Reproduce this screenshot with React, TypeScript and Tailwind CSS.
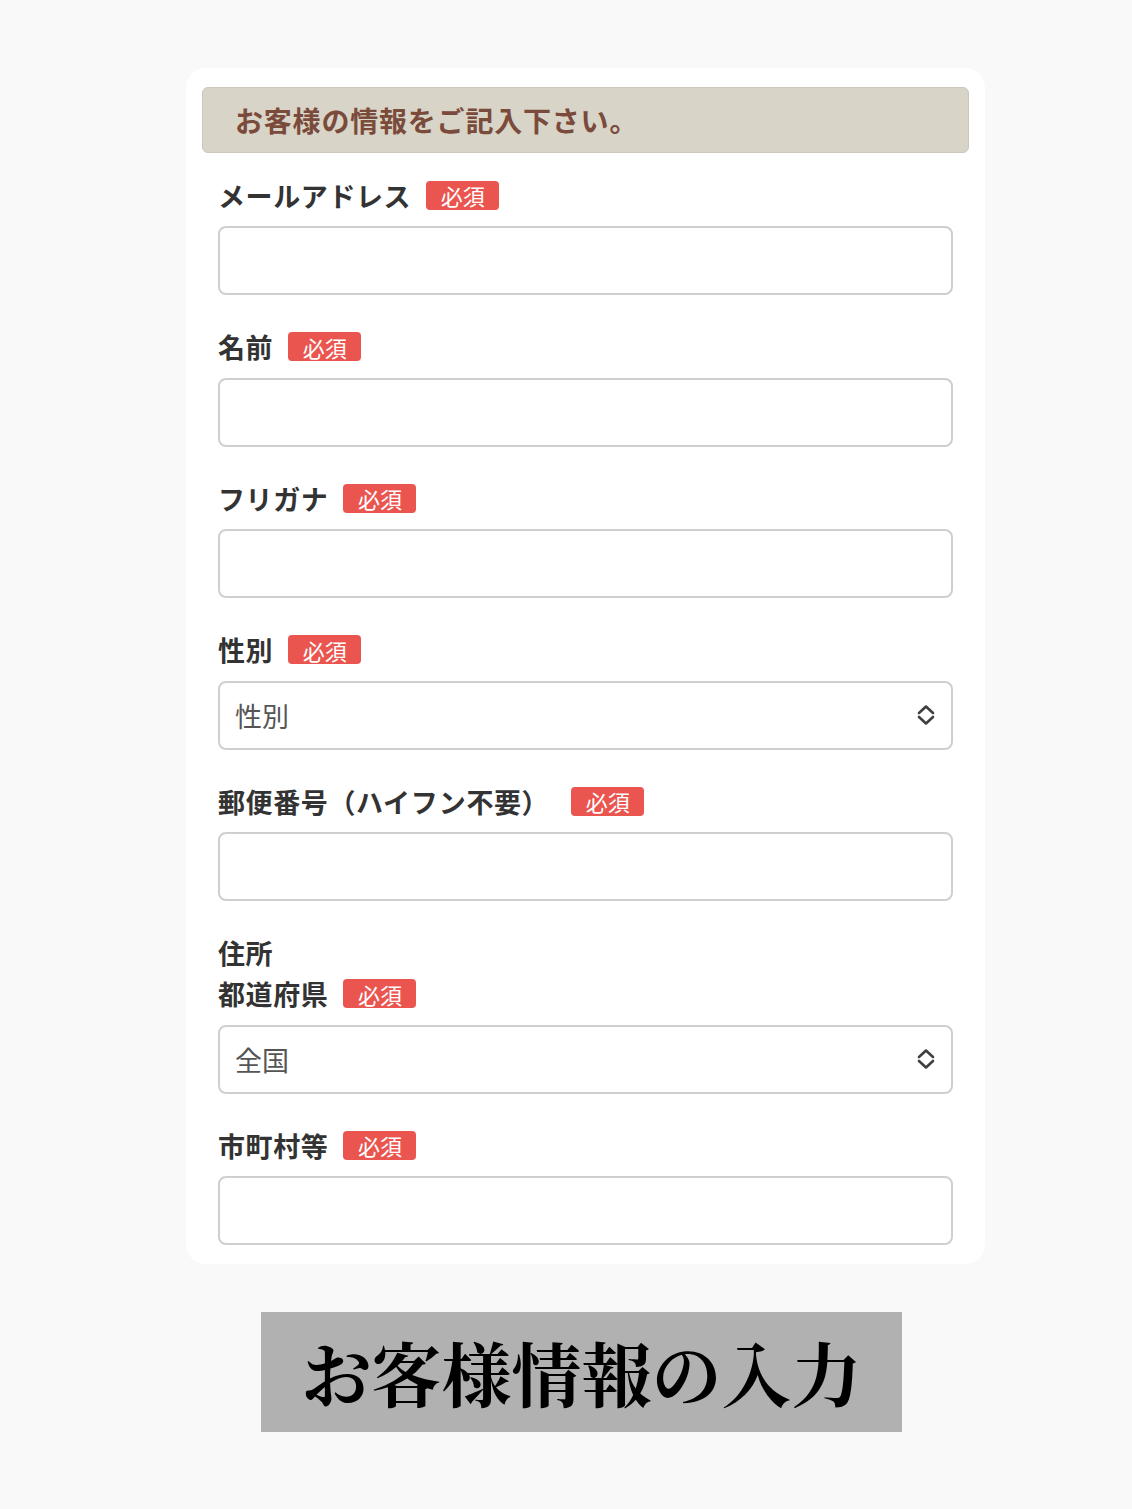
import { Fragment } from 'react';

type Field = {
    labels: string[];
    kind: 'text' | 'select';
    placeholder?: string;
};

const fields: Field[] = [
    { labels: ['メールアドレス'], kind: 'text' },
    { labels: ['名前'], kind: 'text' },
    { labels: ['フリガナ'], kind: 'text' },
    { labels: ['性別'], kind: 'select', placeholder: '性別' },
    { labels: ['郵便番号（ハイフン不要）'], kind: 'text' },
    { labels: ['住所', '都道府県'], kind: 'select', placeholder: '全国' },
    { labels: ['市町村等'], kind: 'text' },
];

const jpFont = "font-['Noto_Sans_CJK_JP',sans-serif]";

function RequiredBadge({ wide }: { wide?: boolean }) {
    return (
        <span
            className={`inline-flex h-[29px] w-[73px] items-center justify-center rounded-[4px] bg-[#ea554f] text-[22px] leading-none font-normal text-white ${wide ? 'ml-[22px]' : 'ml-[15px]'}`}
        >
            必須
        </span>
    );
}

function UpDown() {
    return (
        <svg width="20" height="24" viewBox="0 0 20 24" fill="none" stroke="#3f3f3f" strokeWidth="2.6" strokeLinecap="round" strokeLinejoin="round">
            <path d="M3 10 L10 3.5 L17 10" />
            <path d="M3 14 L10 20.5 L17 14" />
        </svg>
    );
}

function FieldBlock({ field }: { field: Field }) {
    const last = field.labels.length - 1;
    return (
        <div className="flex flex-col">
            <div className="flex flex-col">
                {field.labels.map((label, i) => (
                    <Fragment key={label}>
                        {i === last ? (
                            <div className="flex h-[30px] items-center">
                                <span className="text-[27px] leading-none font-bold tracking-[0.6px] text-[#333333]">{label}</span>
                                <RequiredBadge wide={label.endsWith('）')} />
                            </div>
                        ) : (
                            <div className="mb-[11px] flex h-[30px] items-center">
                                <span className="text-[27px] leading-none font-bold tracking-[0.6px] text-[#333333]">{label}</span>
                            </div>
                        )}
                    </Fragment>
                ))}
            </div>
            <div className="mt-[16px] flex h-[69px] items-center justify-between rounded-[8px] border-2 border-[#cfcfcf] bg-white pl-[15px] pr-[15px]">
                {field.kind === 'select' ? (
                    <>
                        <span className="text-[27px] leading-none text-[#555555]">{field.placeholder}</span>
                        <UpDown />
                    </>
                ) : null}
            </div>
        </div>
    );
}

export default function App() {
    return (
        <div className={`min-h-[1509px] bg-[#f9f9f9] pt-[68px] pb-[78px] ${jpFont}`}>
            <div className="ml-[186px] w-[799px] rounded-[20px] bg-white px-[16px] pt-[19px] pb-[19px]">
                <div className="flex h-[66px] items-center rounded-[6px] border border-[#cdc6bb] bg-[#d8d4c8] pl-[32px]">
                    <span className="text-[28px] leading-none font-bold tracking-[0.8px] text-[#7a4a3a]">
                        お客様の情報をご記入下さい。
                    </span>
                </div>
                <div className="mt-[27px] flex flex-col gap-[36.5px] px-[16px]">
                    {fields.map((f) => (
                        <FieldBlock key={f.labels.join('-')} field={f} />
                    ))}
                </div>
            </div>
            <div className="mt-[48px] ml-[261px] flex h-[120px] w-[641px] items-center justify-center bg-[#b1b1b1]">
                <span className="font-['Noto_Serif_CJK_JP','Noto_Sans_CJK_JP',serif] text-[70px] leading-none font-bold text-black">
                    お客様情報の入力
                </span>
            </div>
        </div>
    );
}
